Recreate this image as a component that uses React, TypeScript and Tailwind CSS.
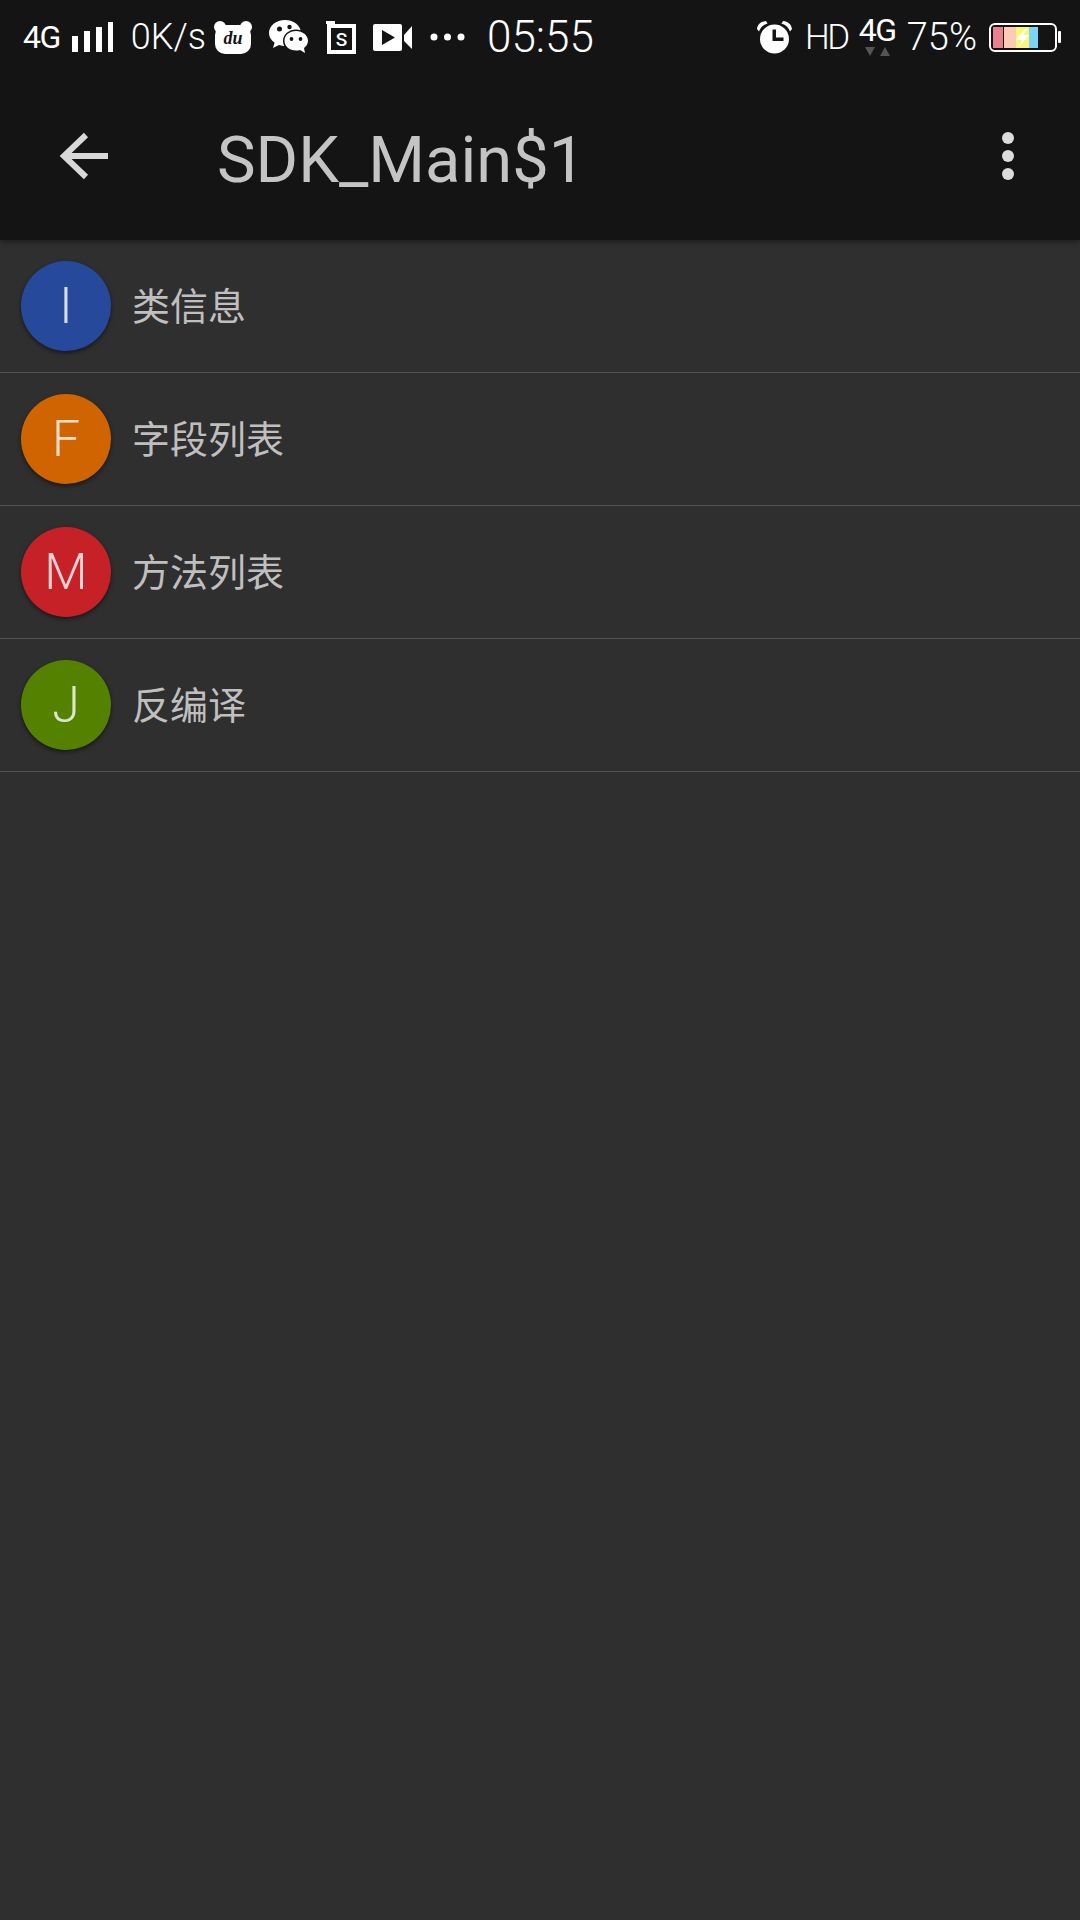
import React from "react";

const rows = [
  { letter: "I", label: "类信息", color: "bg-[#26499b]" },
  { letter: "F", label: "字段列表", color: "bg-[#d06400]" },
  { letter: "M", label: "方法列表", color: "bg-[#c62127]" },
  { letter: "J", label: "反编译", color: "bg-[#548200]" },
];

const SignalBars = () => (
  <svg width="42" height="32" viewBox="0 0 42 32" className="ml-[12px] shrink-0">
    <rect x="0" y="15" width="6" height="16" fill="#fff" />
    <rect x="12" y="10" width="6" height="21" fill="#fff" />
    <rect x="24" y="6" width="6" height="25" fill="#fff" />
    <rect x="36" y="1" width="5" height="30" fill="#fff" />
  </svg>
);

const DuIcon = () => (
  <svg width="38" height="33" viewBox="0 0 38 33" className="ml-[8px] shrink-0">
    <circle cx="6" cy="6" r="6" fill="#fff" />
    <circle cx="32" cy="6" r="6" fill="#fff" />
    <rect x="1" y="4" width="36" height="29" rx="10" fill="#fff" />
    <text x="19" y="23" textAnchor="middle" fontFamily="'Liberation Serif', serif" fontStyle="italic" fontWeight="700" fontSize="18" fill="#141414">
      du
    </text>
  </svg>
);

const WechatIcon = () => (
  <svg width="39" height="34" viewBox="0 0 39 34" className="ml-[17px] shrink-0">
    <path d="M16 0C7 0 0 5.800 0 13c0 4 2.200 7.500 5.600 9.800L4 28l6-3c2 .6 4 .9 6 .9 7 0 16-5 16-13C32 5.800 25 0 16 0z" fill="#fff" />
    <ellipse cx="27" cy="21" rx="13" ry="11.500" fill="#141414" />
    <path d="M27 11c-6.500 0-11.500 4.300-11.500 9.800s5 9.800 11.500 9.800c1.400 0 2.800-.2 4-.6L36 33l-1-5c2.500-1.800 4-4.300 4-7.200C39 15.300 33.500 11 27 11z" fill="#fff" />
    <circle cx="10.500" cy="9" r="2.500" fill="#141414" />
    <circle cx="20.500" cy="7" r="2.200" fill="#141414" />
    <circle cx="22.500" cy="19" r="1.900" fill="#141414" />
    <circle cx="31.500" cy="19" r="1.900" fill="#141414" />
  </svg>
);

const SIcon = () => (
  <svg width="30" height="33" viewBox="0 0 30 33" className="ml-[18px] shrink-0">
    <rect x="0" y="0" width="9" height="3" fill="#fff" />
    <rect x="3" y="5" width="25" height="26" fill="none" stroke="#fff" strokeWidth="4" />
    <text x="15.500" y="25" textAnchor="middle" fontFamily="Roboto, sans-serif" fontWeight="500" fontSize="19" fill="#fff">
      S
    </text>
  </svg>
);

const VideoIcon = () => (
  <svg width="40" height="27" viewBox="0 0 40 27" className="ml-[17px] shrink-0">
    <rect x="0" y="0" width="29" height="27" rx="2" fill="#fff" />
    <path d="M9 6l13 7.500L9 21z" fill="#141414" />
    <path d="M31 11L39 2v23l-8-8z" fill="#fff" />
  </svg>
);

const MoreDots = () => (
  <svg width="35" height="8" viewBox="0 0 35 8" className="ml-[17px] shrink-0">
    <circle cx="4" cy="4" r="3.500" fill="#fff" />
    <circle cx="17.500" cy="4" r="3.500" fill="#fff" />
    <circle cx="31" cy="4" r="3.500" fill="#fff" />
  </svg>
);

const AlarmIcon = () => (
  <svg width="35" height="33" viewBox="0 0 35 33" className="shrink-0">
    <circle cx="17.500" cy="18" r="14.500" fill="#fff" />
    <path d="M0 8C.5 3.500 4 .5 9 0l1.500 2.500C6 4 3.500 6.500 2 10.500z" fill="#fff" />
    <path d="M35 8C34.500 3.500 31 .5 26 0l-1.500 2.500C29 4 31.500 6.500 33 10.500z" fill="#fff" />
    <path d="M15.500 8.500h3.500V16.500h7.500v3.500H15.500z" fill="#141414" />
  </svg>
);

const NetworkBadge = () => (
  <div className="ml-[11px] flex h-[38px] w-[37px] shrink-0 flex-col items-center">
    <span className="text-[32px] leading-[25px] tracking-[-1.500px] text-white">4G</span>
    <svg width="25" height="9" viewBox="0 0 25 9" className="mt-[4px]">
      <path d="M0 0h10L5 9z" fill="#555" />
      <path d="M15 9h10L20 0z" fill="#555" />
    </svg>
  </div>
);

const BatteryIcon = () => (
  <svg width="73" height="29" viewBox="0 0 73 29" className="ml-[12px] shrink-0">
    <rect x="1" y="1" width="66" height="27" rx="5" fill="none" stroke="#fff" strokeWidth="2" />
    <rect x="4" y="4" width="10" height="21" fill="#e8808f" />
    <rect x="15" y="4" width="12" height="21" fill="#fbcbb5" />
    <rect x="27" y="4" width="13" height="21" fill="#f9f777" />
    <rect x="40" y="4" width="9" height="21" fill="#7dd3f5" />
    <path d="M36 6l-9 11h6l-3 7 10-12h-6l4-6z" fill="#fff" />
    <rect x="69" y="8" width="3" height="12" rx="1" fill="#fff" />
  </svg>
);

const ListRow = ({ letter, label, color }: { letter: string; label: string; color: string }) => (
  <div className="flex h-[133px] items-center border-b border-[#525252] pb-px pl-[21px]">
    <div className={`${color} flex h-[90px] w-[90px] items-center justify-center rounded-full text-[50px] font-light leading-none text-white/80 shadow-[0_2px_4px_rgba(0,0,0,0.5)]`}>
      {letter}
    </div>
    <span className="ml-[21px] pt-[3px] text-[38px] leading-none text-[#bfbfbf]">{label}</span>
  </div>
);

export default function App() {
  return (
    <div className="flex h-[1920px] w-[1080px] flex-col bg-[#2f2f2f] font-['Roboto','Noto_Sans_CJK_SC',sans-serif]">
      <header className="relative z-10 bg-[#141414] shadow-[0_2px_6px_rgba(0,0,0,0.4)]">
        <div className="flex h-[72px] items-center justify-between pl-[23px] pr-[18px] pt-[2px]">
          <div className="flex items-center">
            <span className="text-[32px] leading-none tracking-[-1.500px] text-white">4G</span>
            <SignalBars />
            <span className="ml-[17px] text-[36px] font-light leading-none text-white">0K/s</span>
            <DuIcon />
            <WechatIcon />
            <SIcon />
            <VideoIcon />
            <MoreDots />
            <span className="ml-[22px] text-[44px] font-light leading-none text-white">05:55</span>
          </div>
          <div className="flex items-center">
            <AlarmIcon />
            <span className="ml-[13px] text-[35px] font-light leading-none tracking-[-2.500px] text-white">HD</span>
            <NetworkBadge />
            <span className="ml-[11px] text-[38px] font-light leading-none text-white">75%</span>
            <BatteryIcon />
          </div>
        </div>
        <div className="flex h-[168px] items-start">
          <svg width="50" height="48" viewBox="0 0 50 48" className="ml-[59px] mt-[60px] shrink-0">
            <path d="M49 24H5M27 3L5 24l22 21" fill="none" stroke="#d8d8d8" strokeWidth="6" />
          </svg>
          <h1 className="ml-[108px] mt-[50px] text-[65px] font-normal leading-[76px] text-[#c4c4c4]">SDK_Main$1</h1>
          <div className="ml-auto mr-[66px] mt-[60px] flex flex-col gap-[6px]">
            <span className="h-[12px] w-[12px] rounded-full bg-[#dcdcdc]" />
            <span className="h-[12px] w-[12px] rounded-full bg-[#dcdcdc]" />
            <span className="h-[12px] w-[12px] rounded-full bg-[#dcdcdc]" />
          </div>
        </div>
      </header>
      <main>
        {rows.map((row) => (
          <ListRow key={row.letter} {...row} />
        ))}
      </main>
    </div>
  );
}
